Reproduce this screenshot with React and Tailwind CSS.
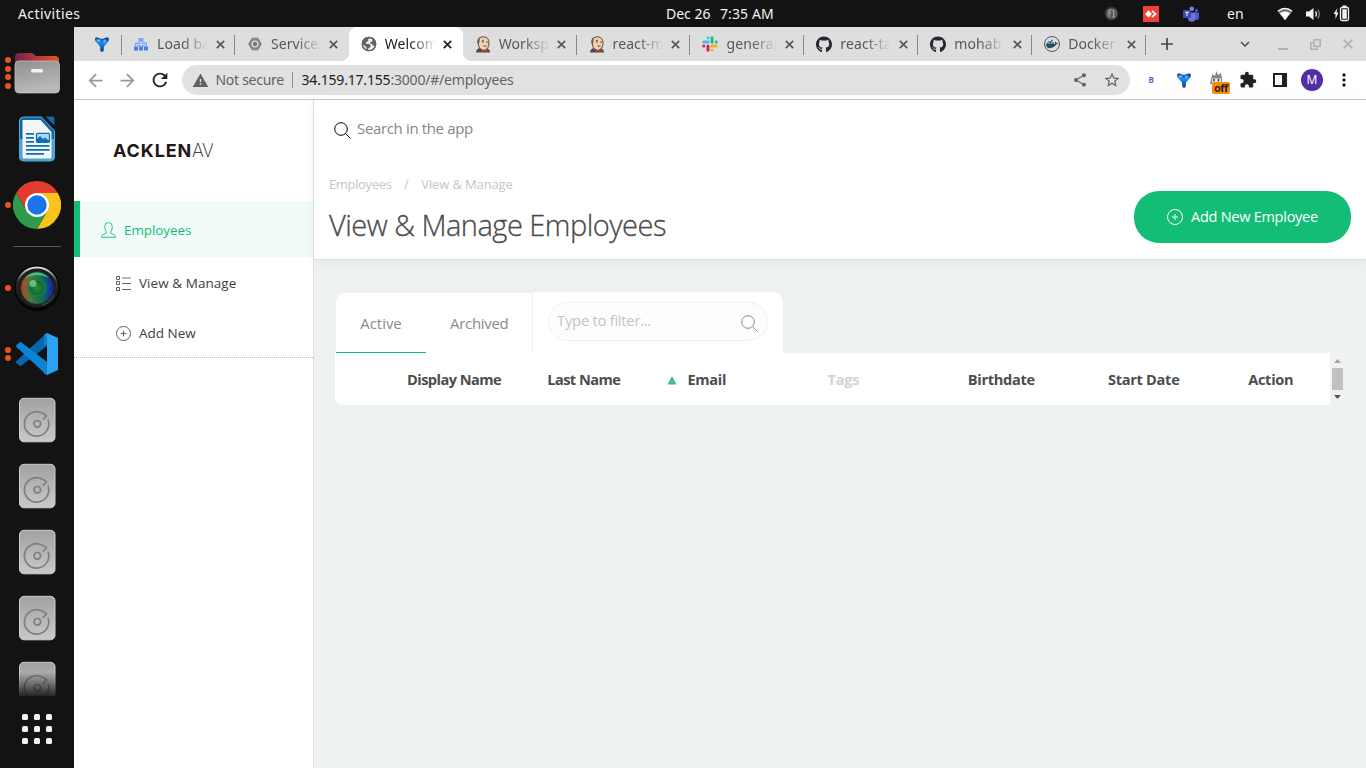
import {
  MdArrowBack, MdArrowForward, MdExpandMore, MdExtension, MdMoreVert,
  MdRefresh, MdShare, MdStarBorder, MdWarning,
} from "react-icons/md";
import { FaDocker, FaGithub } from "react-icons/fa";

/* ---------- Dock ---------- */

function FilesIcon() {
  return (
    <svg width="48" height="48" viewBox="0 0 48 48">
      <defs>
        <linearGradient id="fb" x1="0" x2="1"><stop offset="0" stopColor="#77214f" /><stop offset="1" stopColor="#e95420" /></linearGradient>
        <linearGradient id="ff" x1="0" x2=".3" y1="0" y2="1"><stop offset="0" stopColor="#8f8f8f" /><stop offset="1" stopColor="#b9b9b9" /></linearGradient>
      </defs>
      <path d="M2 8a4 4 0 0 1 4-4h13l4 3h19a4 4 0 0 1 4 4v12H2z" fill="url(#fb)" />
      <rect x="2" y="12" width="44.500" height="32" rx="4" fill="url(#ff)" stroke="#c9c9c9" strokeWidth=".7" />
      <rect x="18" y="20" width="12" height="3.500" rx="1.500" fill="#f4f4f4" />
    </svg>
  );
}

function WriterIcon() {
  return (
    <svg width="48" height="48" viewBox="1.500 0 48 48">
      <path d="M12 2h18l13 14v26a4 4 0 0 1-4 4H12a4 4 0 0 1-4-4V6a4 4 0 0 1 4-4z" fill="#0a6aa5" stroke="#5aaedb" />
      <path d="M8 24v18a4 4 0 0 0 4 4h27a4 4 0 0 0 4-4V24z" fill="#4aa5d5" />
      <path d="M11 5h18l11 12v25a1.500 1.500 0 0 1-1.500 1.500h-26A1.500 1.500 0 0 1 11 42z" fill="#f5f5f5" />
      <path d="M34 1.500h7a2 2 0 0 1 2 2v7z" fill="#0b6ba4" />
      <g stroke="#0b70b4" strokeWidth="1.800"><path d="M14.500 18.800h8M14.500 22.800h8M14.500 26.800h8M14.500 30.800H38M14.500 34.800H38M14.500 38.800h18" /></g>
      <rect x="25" y="18.300" width="13" height="9" rx="1" fill="#a9dcf5" stroke="#0b70b4" strokeWidth="1.300" />
      <path d="M25.500 27v-3l3-3 3 3 2-1.500 4.500 3.500V27z" fill="#0b70b4" />
    </svg>
  );
}

function ChromeIcon() {
  return (
    <svg width="48" height="48" viewBox="0 0 48 48">
      <path d="M24 0A24 24 0 0 1 44.800 12H24L13.600 30 3.200 12A24 24 0 0 1 24 0z" fill="#e33b2e" />
      <path d="M44.800 12A24 24 0 0 1 24 48L34.400 30 24 12z" fill="#fcc31e" />
      <path d="M3.200 12 13.600 30h20.800L24 48A24 24 0 0 1 3.200 12z" fill="#2f9b4c" />
      <circle cx="24" cy="24" r="12" fill="#fff" />
      <circle cx="24" cy="24" r="9.700" fill="#1a73e8" />
    </svg>
  );
}

function LensIcon() {
  return (
    <svg width="48" height="48" viewBox="0 0 48 48">
      <defs>
        <linearGradient id="lr"><stop offset="0" stopColor="#c8372a" /><stop offset=".3" stopColor="#4f7a3c" /><stop offset=".65" stopColor="#15694f" /><stop offset="1" stopColor="#1220c8" /></linearGradient>
        <radialGradient id="lg"><stop offset="0" stopColor="#2c9428" /><stop offset=".55" stopColor="#0f6535" stopOpacity=".9" /><stop offset="1" stopColor="#118a62" stopOpacity="0" /></radialGradient>
        <linearGradient id="rim" x1="0" x2="0" y1="0" y2="1"><stop offset="0" stopColor="#e0e0e0" /><stop offset=".35" stopColor="#2a2a2a" /><stop offset="1" stopColor="#050505" /></linearGradient>
      </defs>
      <circle cx="24" cy="24" r="22" fill="#1e1e1e" stroke="#000" strokeWidth="1.500" />
      <circle cx="24" cy="24" r="20.500" fill="none" stroke="url(#rim)" strokeWidth="1.800" />
      <path d="M29 41a18 18 0 0 0 12-10" fill="none" stroke="#444" strokeWidth="1.500" />
      <circle cx="24" cy="24" r="16.300" fill="url(#lr)" stroke="#0d3b28" strokeWidth=".8" />
      <path d="M12 14a16 16 0 0 1 24 0q-12-6-24 0z" fill="#51d8a0" opacity=".75" />
      <circle cx="24" cy="24" r="12" fill="url(#lg)" />
      <circle cx="24" cy="24" r="8" fill="none" stroke="#1a9a58" opacity=".6" />
      <circle cx="20" cy="19.500" r="3.500" fill="#9be0a0" opacity=".65" />
    </svg>
  );
}

function CodeIcon() {
  return (
    <svg width="48" height="48" viewBox="0 0 48 48">
      <path d="M33.500 3 3.500 31q-1 1 0 2l3 2.500q1 .8 2 0L36 14.500z" fill="#0668ae" />
      <path d="M33.500 45 3.500 17q-1-1 0-2l3-2.500q1-.8 2 0L36 33.500z" fill="#0b84d8" />
      <path d="M34 3l11 5v32l-11 5z" fill="#2ba3f2" />
      <path d="M31 4.500l3-1.500v11l-3 2zM31 43.500l3 1.500V34l-3-2.500z" fill="#1582c8" />
    </svg>
  );
}

function DiskIcon() {
  return (
    <svg width="48" height="48" viewBox="0 0 48 48">
      <defs><linearGradient id="dk" x1="0" x2="0" y1="0" y2="1"><stop offset="0" stopColor="#a2a2a2" /><stop offset="1" stopColor="#c9c9c9" /></linearGradient></defs>
      <rect x="6.500" y="2.300" width="35.500" height="43.500" rx="4.500" fill="url(#dk)" stroke="#cfcfcf" strokeWidth="1" />
      <path d="M35 23.500A12.200 12.200 0 1 1 29.500 17.200q2.500 1 4 2.800l-3.600 3.600" fill="none" stroke="#7f7f7f" strokeWidth="1.700" />
      <circle cx="24.300" cy="27.800" r="3.300" fill="none" stroke="#7f7f7f" strokeWidth="1.700" />
    </svg>
  );
}

function DockItem({ icon, dots = 0 }) {
  return (
    <div className="flex h-[66px] w-[74px] shrink-0 items-center">
      <div className="flex w-[13px] flex-col items-end gap-[2.700px] pr-[2px]">
        {Array.from({ length: dots }, (_, i) => (
          <span key={i} className="size-[6px] rounded-full bg-[#e95420]" />
        ))}
      </div>
      {icon}
    </div>
  );
}

function Dock() {
  return (
    <nav className="flex w-[74px] shrink-0 flex-col bg-[#131313] pt-[13px]">
      <DockItem icon={<FilesIcon />} dots={4} />
      <DockItem icon={<WriterIcon />} />
      <DockItem icon={<ChromeIcon />} dots={1} />
      <div className="mx-[13px] mt-2 h-px shrink-0 bg-[#5a5a5a]" />
      <div className="relative mt-2 h-[441px] shrink-0 overflow-hidden">
        <DockItem icon={<LensIcon />} dots={1} />
        <DockItem icon={<CodeIcon />} dots={2} />
        {[1, 2, 3, 4, 5].map((n) => <DockItem key={n} icon={<DiskIcon />} />)}
        <div className="absolute inset-x-0 bottom-0 h-6 bg-linear-to-b from-transparent to-[#131313]/90" />
      </div>
      <div className="mx-auto mt-[18px] grid grid-cols-3 gap-[6px]">
        {Array.from({ length: 9 }, (_, i) => <span key={i} className="size-[6px] rounded-[1.500px] bg-[#f2f2f2]" />)}
      </div>
    </nav>
  );
}

/* ---------- System bar ---------- */

function TeamsIcon() {
  return (
    <svg width="16" height="16" viewBox="0 0 16 16">
      <circle cx="13.400" cy="4.500" r="1.600" fill="#5059c9" />
      <circle cx="8.800" cy="2.700" r="2.300" fill="#7b83eb" />
      <path d="M11 6.500h5V11a2.500 2.500 0 0 1-5 1z" fill="#5059c9" />
      <path d="M5 6.500h7.500V12a3.700 3.700 0 0 1-7.500 0z" fill="#6a73dc" />
      <rect x="0" y="4" width="8" height="8" rx=".8" fill="#4048b0" />
      <path d="M2.200 6.300h3.600M4 6.300V10" stroke="#fff" strokeWidth="1" />
    </svg>
  );
}

function SystemBar() {
  return (
    <header className="flex h-[27px] shrink-0 items-center bg-[#131313] font-['Noto_Sans',sans-serif] text-[14px] leading-[27px] whitespace-pre text-[#f2f2f2]">
      <span className="ml-[18px] w-[648px] shrink-0 tracking-[0.4px]">Activities</span>
      <span className="w-[54px] shrink-0">Dec 26</span>
      <span className="w-[384px] shrink-0 tracking-[0.1px]">7:35 AM</span>
      <svg className="shrink-0" width="15" height="15" viewBox="0 0 15 15">
        <circle cx="7.500" cy="7.500" r="6.300" fill="#5c5c5c" stroke="#333" strokeWidth="1.400" />
        <path d="M5 4v7M5 4h2.500M5 7h2M9.700 4v7M8.500 4.500h1.200M8.500 11h2.400" stroke="#aaa" fill="none" />
      </svg>
      <svg className="ml-[24px] shrink-0" width="16" height="16" viewBox="0 0 16 16">
        <rect width="16" height="16" fill="#ef4136" />
        <path d="M5.500 4.500 9 8l-3.500 3.500L2 8z" fill="#fff" />
        <path d="m9 4.800 3.500 3.200L9 11.200" fill="none" stroke="#fff" strokeWidth="1.800" />
      </svg>
      <span className="ml-6"><TeamsIcon /></span>
      <span className="ml-[28px] w-[50px]">en</span>
      <svg className="shrink-0" width="16" height="14" viewBox="0 0 16 14">
        <path d="M8 13.500.5 4.200Q8-2 15.500 4.200z" fill="#777" />
        <path d="M8 13 2.800 6.300Q8 2.500 13.200 6.300z" fill="#fff" />
        <path d="M.8 4.200Q8-1.600 15.200 4.200" stroke="#fff" strokeWidth="1.200" fill="none" />
      </svg>
      <svg className="ml-[13px] shrink-0" width="16" height="14" viewBox="0 0 16 14">
        <path d="M0 4.500h3L7.500 1v12L3 9.500H0z" fill="#f2f2f2" />
        <path d="M9.500 4.300q2 2.700 0 5.400" stroke="#f2f2f2" strokeWidth="1.200" fill="none" />
        <path d="M11.800 2.500q3 4.500 0 9" stroke="#8a8a8a" strokeWidth="1.200" fill="none" />
      </svg>
      <svg className="ml-[11px] shrink-0" width="17" height="17" viewBox="0 0 17 17">
        <path d="M4.500 3 .5 9h2v5l3-6.500h-2z" fill="#f2f2f2" />
        <rect x="7.500" y="2.500" width="8" height="13" rx="1.500" fill="none" stroke="#f2f2f2" strokeWidth="1.300" />
        <path d="M9.300 4.300h4.500v9.500H9.300zM9.500.5h4V2h-4z" fill="#f2f2f2" />
      </svg>
    </header>
  );
}

/* ---------- Browser chrome ---------- */

function VBadge() {
  return (
    <svg width="16" height="16" viewBox="0 0 16 16">
      <defs>
        <linearGradient id="vb" x1="0" x2="0" y1="0" y2="1"><stop offset="0" stopColor="#0c2f80" /><stop offset=".4" stopColor="#1590f0" /><stop offset="1" stopColor="#0a3a80" /></linearGradient>
        <radialGradient id="vh"><stop offset="0" stopColor="#8fd6ff" /><stop offset="1" stopColor="#2b9cf5" stopOpacity="0" /></radialGradient>
      </defs>
      <path d="M1 2.500Q1.500 1 3.500 1.500L8 3l4.500-1.500q2-.5 2.500 1 .3 2-1.500 4L10 10.500l-.4 4.500q-.1.800-1.600.8t-1.600-.8L6 10.500l-3.500-4Q.7 4.500 1 2.500z" fill="url(#vb)" />
      <ellipse cx="4.500" cy="4.500" rx="3.500" ry="2.600" fill="url(#vh)" />
      <ellipse cx="10.500" cy="5" rx="2.800" ry="2.600" fill="url(#vh)" />
    </svg>
  );
}

function BalancerIcon() {
  return (
    <svg width="14" height="13" viewBox="0 0 14 13">
      <path d="M4.500 0h5v4h-5zM1 4.500h12v4H1z" fill="#7ea6f7" />
      <path d="M7 3v6M2.500 9V6.500h9V9" fill="none" stroke="#dedede" strokeWidth=".9" />
      <path d="M0 8.500h4v4H0zM5 8.500h4v4H5zM10 8.500h4v4h-4z" fill="#4a7ce8" />
    </svg>
  );
}

function EngineIcon() {
  return (
    <svg width="14" height="14" viewBox="0 0 14 14">
      <path d="M4 1.200h6L13.300 7 10 12.800H4L.7 7z" fill="#858585" stroke="#858585" strokeLinejoin="round" />
      <circle cx="7" cy="7" r="3.500" fill="#dedede" />
      <circle cx="7" cy="7" r="2.200" fill="#757575" />
    </svg>
  );
}

function GlobeIcon() {
  return (
    <svg width="16" height="16" viewBox="0 0 16 16">
      <circle cx="8" cy="8" r="7.300" fill="#5f6368" />
      <path d="M9.500 1.700 7 3.500l.3 1.800-2 .7-.5 1.800 3.400.2 1.500 1.500-.4 1.800-1.800 1-.6 2.200q6 0 7.500-4.500l-2.400-.2-1.300-2-1.900-.4.500-1.300 1.800-.3.4-2z" fill="#fff" opacity=".92" />
      <path d="M1.200 8.200 5 10.500l.8 1.400-.5 2A7 7 0 0 1 1.200 8.200z" fill="#fff" opacity=".8" />
      <circle cx="8" cy="8" r="6.700" fill="none" stroke="#5f6368" strokeWidth="1.300" />
    </svg>
  );
}

function JenkinsIcon() {
  return (
    <svg width="16" height="17" viewBox="0 0 16 17">
      <path d="M1 16.500q0-3.500 3.500-4.500h7q3.500 1 3.500 4.500z" fill="#3d4f5c" />
      <path d="M3 6Q3 .8 8.500.8 14 1 14 7t-5 7.500Q4 13.500 3.500 9z" fill="#efd3b3" stroke="#4a3b30" strokeWidth=".9" />
      <path d="M2.800 8Q1.300 3 5 1.200 4.500 4 4.300 7z" fill="#6b5a4c" />
      <path d="M7 6h2M11 6h2M8.500 10h3M7 4.500l2-.3" stroke="#4a3b30" strokeWidth=".9" />
      <path d="m6.500 13 3 1.300 3-1.300v3.300l-3-1.300-3 1.300z" fill="#d33833" />
    </svg>
  );
}

function SlackIcon() {
  return (
    <svg width="16" height="16" viewBox="0 0 16 16" strokeWidth="3" strokeLinecap="round">
      <path d="M1.700 6h4.500" stroke="#36c5f0" /><path d="M6 1.700v.1" stroke="#36c5f0" />
      <path d="M10 1.700v4.500M14.200 6h.1" stroke="#2eb67d" />
      <path d="M9.900 10h4.400M10 14.200v.1" stroke="#ecb22e" />
      <path d="M6 9.900v4.400M1.700 10h.1" stroke="#e01e5a" />
    </svg>
  );
}

const TABS = [
  { title: "Load balancing", icon: <BalancerIcon /> },
  { title: "Services", icon: <EngineIcon /> },
  { title: "Welcome", icon: <GlobeIcon />, active: true },
  { title: "Workspace", icon: <JenkinsIcon /> },
  { title: "react-master", icon: <JenkinsIcon /> },
  { title: "general", icon: <SlackIcon /> },
  { title: "react-tab", icon: <FaGithub size={17} className="text-[#24292f]" /> },
  { title: "mohab", icon: <FaGithub size={17} className="text-[#24292f]" /> },
  {
    title: "Docker",
    icon: (
      <span className="flex size-4 items-center justify-center rounded-full border-[1.500px] border-[#3b5a70]">
        <FaDocker size={12} className="text-[#274b63]" />
      </span>
    ),
  },
];

function Cross({ size, className }) {
  return (
    <svg width={size} height={size} viewBox="0 0 9 9" stroke="currentColor" strokeWidth="1.700" className={className}>
      <path d="m.8.800 7.400 7.400M8.200.8.800 8.200" />
    </svg>
  );
}

function TabFlare({ className }) {
  return (
    <svg width="8" height="8" viewBox="0 0 8 8" className={`absolute bottom-0 ${className}`}>
      <path d="M8 0v8H0a8 8 0 0 0 8-8z" fill="#fff" />
    </svg>
  );
}

function Tab({ title, icon, active, divider }) {
  return (
    <div className={`relative flex h-full min-w-0 flex-1 items-center pl-[12px] ${active ? "rounded-t-lg bg-white text-[#202124]" : "text-[#55585c]"}`}>
      <span className="flex w-4 shrink-0 justify-center">{icon}</span>
      <span className="ml-2 w-[51px] shrink-0 overflow-hidden mask-r-from-50% mask-r-to-100% text-[14px] leading-5 tracking-[0.1px] whitespace-nowrap">{title}</span>
      <Cross size={9} className="ml-[7.500px] shrink-0" />
      {divider && <span className="absolute top-2 right-0 h-5 w-px bg-[#888]" />}
      {active && <TabFlare className="-left-2" />}
      {active && <TabFlare className="-right-2 -scale-x-100" />}
    </div>
  );
}

function TabStrip() {
  return (
    <div className="flex h-[34px] bg-[#dedede]">
      <div className="relative flex w-[47px] shrink-0 items-center pl-5">
        <VBadge />
        <span className="absolute top-2 -right-px h-5 w-px bg-[#888]" />
      </div>
      <div className="flex w-[1025px] shrink-0">
        {TABS.map((t, i) => <Tab key={i} {...t} divider={i !== 1 && i !== 2} />)}
      </div>
      <div className="flex flex-1 items-center text-[#45484c]">
        <svg width="12" height="12" viewBox="0 0 12 12" stroke="currentColor" strokeWidth="1.700" className="ml-[15px]"><path d="M6 0v12M0 6h12" /></svg>
        <MdExpandMore size={18} className="ml-[63px]" />
        <span className="mt-[9px] ml-[24px] h-[2px] w-[10px] bg-[#b2b2b2]" />
        <svg className="ml-[22px]" width="11" height="11" viewBox="0 0 11 11" fill="none" stroke="#b2b2b2" strokeWidth="1.600">
          <path d="M3.800.8h6.400v6.400H3.800zM3.500 4H.8v6.200H7V7.500" />
        </svg>
        <Cross size={10} className="ml-[22px] text-[#b2b2b2]" />
      </div>
    </div>
  );
}

function Toolbar() {
  return (
    <div className="flex h-[39px] items-center border-b border-[#c8c8c8] bg-white">
      <MdArrowBack size={21} className="ml-[11px] text-[#9a9a9a]" />
      <MdArrowForward size={21} className="ml-[11px] text-[#9a9a9a]" />
      <MdRefresh size={22} className="ml-[10.500px] text-[#202124]" />
      <div className="ml-[11px] flex h-[30px] w-[948px] shrink-0 items-center rounded-full bg-[#e1e1e1] text-[14px] leading-5 whitespace-nowrap">
        <MdWarning size={17} className="ml-[10px] text-[#5f6368]" />
        <span className="ml-[7px] w-[76px] tracking-[-0.28px] text-[#5f6368]">Not secure</span>
        <span className="h-4 w-px bg-[#8a8a8a]" />
        <span className="ml-[9px] tracking-[-0.19px] text-[#5f6368]"><span className="text-[#202124]">34.159.17.155</span>:3000/#/employees</span>
        <MdShare size={16} className="ml-auto text-[#5f6368]" />
        <MdStarBorder size={18} className="mr-[9px] ml-[15px] text-[#5f6368]" />
      </div>
      <span className="ml-[19px] text-[8px] leading-4 font-bold text-[#6b5fd0]">B</span>
      <span className="ml-[22px]"><VBadge /></span>
      <span className="relative ml-[16px] size-5">
        <svg width="20" height="20" viewBox="0 0 20 20">
          <path d="m3 9 1.500-5L7 6l1.500-5L10 5l3-2 1 6v5H2z" fill="#858585" />
          <path d="M4 8.500h9V14H4z" fill="#eee" /><path d="M6 9v2.500M10.500 9v2.500" stroke="#333" strokeWidth="1.500" />
        </svg>
        <span className="absolute top-[12px] left-[4px] flex h-3 w-[18px] items-center justify-center rounded-[2px] bg-[#ff8a00] text-[11px] leading-3 font-bold tracking-[-0.5px] text-[#222]">off</span>
      </span>
      <MdExtension size={18} className="ml-[11px] text-[#202124]" />
      <span className="ml-[16px] size-[14px] border-2 border-r-[5px] border-[#202124]" />
      <span className="ml-[14px] flex size-[22px] items-center justify-center rounded-full bg-[#512da8] text-[12px] text-white">M</span>
      <MdMoreVert size={20} className="ml-[11px] text-[#202124]" />
    </div>
  );
}

/* ---------- Application ---------- */

function PlusCircle({ size, className }) {
  return (
    <svg width={size} height={size} viewBox="0 0 16 16" fill="none" stroke="currentColor" className={className}>
      <circle cx="8" cy="8" r="7.500" /><path d="M8 5v6M5 8h6" />
    </svg>
  );
}

function SearchGlyph({ className }) {
  return (
    <svg width="17" height="17" viewBox="0 0 17 17" fill="none" stroke="currentColor" className={className}>
      <circle cx="7" cy="7" r="6.300" /><path d="m11.500 11.500 5 5" />
    </svg>
  );
}

function Sidebar() {
  return (
    <aside className="w-[240px] shrink-0 border-r border-[#dfe2e3] bg-white">
      <div className="flex h-[101px] items-center pl-[39px]">
        <div className="flex w-[100px] overflow-hidden font-['Inter',sans-serif] text-[18px] leading-5 whitespace-nowrap text-[#231815]">
          <span className="w-[79px] shrink-0 font-bold tracking-[0.900px]">ACKLEN</span>
          <span className="font-extralight tracking-[-0.5px]">AV</span>
        </div>
      </div>
      <div className="flex h-14 items-center border-l-[6px] border-[#14bd76] bg-[#f1fcfa] pt-[2px] pl-[21px] text-[#14bd76]">
        <svg width="15" height="16" viewBox="0 0 15 16" fill="none" stroke="currentColor" strokeWidth=".9">
          <path d="M5.500 10Q3.500 8 3.700 4.500 3.800.6 7.500.6t3.800 3.900Q11.500 8 9.500 10q0 1.500 2 2 3 .8 3 3.300H.5Q.5 12.800 3.500 12q2-.5 2-2z" />
        </svg>
        <span className="ml-[8px] text-[13.500px] font-medium tracking-[-0.1px]">Employees</span>
      </div>
      <div className="border-b border-dotted border-[#b9b9b9] text-[13.500px] font-medium text-[#404040]">
        <div className="flex h-[50px] items-center pt-[2px] pl-[42px]">
          <svg width="15" height="15" viewBox="0 0 15 15" fill="none" stroke="#66606c">
            <path d="M.5.5h3v3h-3zM.5 5.500h3v3h-3zM.5 11.500h3v3h-3zM6 7.500h9M6 13.500h9" /><path d="M6 2h9" stroke="#bbb6bd" strokeWidth="2" />
          </svg>
          <span className="ml-2 tracking-[0.05px]">View &amp; Manage</span>
        </div>
        <div className="flex h-[50px] items-center pt-[2px] pl-[42px]">
          <PlusCircle size={15} className="text-[#555]" />
          <span className="ml-2">Add New</span>
        </div>
      </div>
    </aside>
  );
}

function PageHeader() {
  return (
    <header className="h-[160px] border-b border-[#dcdfe0] bg-white shadow-[0_2px_14px_rgba(0,0,0,0.05)]">
      <div className="ml-[15px] flex h-[58px] items-center pl-[5px]">
        <SearchGlyph className="mt-[2px] text-black" />
        <span className="mb-[2px] ml-[6px] text-[15px] tracking-[-0.35px] text-[#848688]">Search in the app</span>
      </div>
      <div className="flex justify-between px-[15px]">
        <div className="pt-[16px]">
          <div className="flex text-[13px] leading-5 text-[#c6c6c6]">
            <span className="tracking-[-0.35px]">Employees</span>
            <span className="mx-[12.500px]">/</span>
            <span className="tracking-[-0.13px]">View &amp; Manage</span>
          </div>
          <h1 className="mt-1 text-[29px] leading-[54px] font-light tracking-[-0.5px] text-[#4a4a4a] [-webkit-text-stroke:0.3px_#4a4a4a]">View &amp; Manage Employees</h1>
        </div>
        <button className="mt-[33px] flex h-[52px] w-[217px] items-center rounded-[25px] bg-[#14bd76] pl-[33px] text-white">
          <PlusCircle size={16} />
          <span className="ml-2 text-[14.500px] tracking-[-0.26px]">Add New Employee</span>
        </button>
      </div>
    </header>
  );
}

function EmployeeTable() {
  const columns = ["Display Name", "Last Name", "Email", "Tags", "Birthdate", "Start Date", "Action"];
  return (
    <section className="pt-8 pl-[21px]">
      <div className="flex h-[61px] w-[448px] rounded-t-[10px] bg-white">
        <div className="flex w-[198px] rounded-tl-[10px] border border-b-0 border-[#f1f2f2] text-[15px] text-[#8b8b8b]">
          <div className="flex w-[90px] items-center justify-center border-b border-[#14bd76] pt-[2px] tracking-[-0.05px]">Active</div>
          <div className="flex flex-1 items-center pt-px pl-6 tracking-[-0.3px]">Archived</div>
        </div>
        <div className="mt-[10px] ml-[15px] flex h-[39px] w-[220px] items-center rounded-full border border-[#f1f1f1] bg-[#fdfdfd] pl-[8px] text-[15px] text-[#c4c4c4]">
          <span className="mb-[2px] tracking-[-0.35px]">Type to filter...</span>
          <SearchGlyph className="mt-[3px] mr-[9px] ml-auto text-[#8b8b8b]" />
        </div>
      </div>
      <div className="flex h-[52px]">
        <div className="flex w-[995px] rounded-bl-[8px] bg-white pl-[72px] text-[14.600px] font-bold tracking-[-0.3px] text-[#4d4d4d]">
          {columns.map((c) => (
            <div key={c} className={`relative flex w-[140.200px] shrink-0 items-center pt-[2px] last:w-auto ${c === "Tags" ? "text-[#d3d3d3]" : ""}`}>
              {c === "Email" && (
                <svg className="absolute -left-[20px]" width="10" height="9" viewBox="0 0 10 9"><path d="M5 0 9.500 8.500h-9z" fill="#3cc08a" /></svg>
              )}
              <span className={c.includes("Name") ? "tracking-[-0.55px]" : ""}>{c}</span>
            </div>
          ))}
        </div>
        <div className="flex w-[15px] flex-col items-center bg-[#f1f1f1] py-[6px]">
          <svg width="7" height="4" viewBox="0 0 7 4"><path d="m3.500 0 3.500 4H0z" fill="#a3a3a3" /></svg>
          <span className="mt-[5px] h-[23px] w-[11px] bg-[#c1c1c1]" />
          <svg className="mt-[5px]" width="7" height="4" viewBox="0 0 7 4"><path d="M0 0h7L3.500 4z" fill="#505050" /></svg>
        </div>
      </div>
    </section>
  );
}

export default function App() {
  return (
    <div className="flex h-[768px] w-[1366px] flex-col overflow-hidden bg-[#131313]">
      <SystemBar />
      <div className="flex min-h-0 flex-1">
        <Dock />
        <div className="flex min-w-0 flex-1 flex-col">
          <div className="font-['Noto_Sans',sans-serif]">
            <TabStrip />
            <Toolbar />
          </div>
          <div className="flex flex-1 font-['Open_Sans',sans-serif]">
            <Sidebar />
            <main className="min-w-0 flex-1 bg-[#edf1f2]">
              <PageHeader />
              <EmployeeTable />
            </main>
          </div>
        </div>
      </div>
    </div>
  );
}
